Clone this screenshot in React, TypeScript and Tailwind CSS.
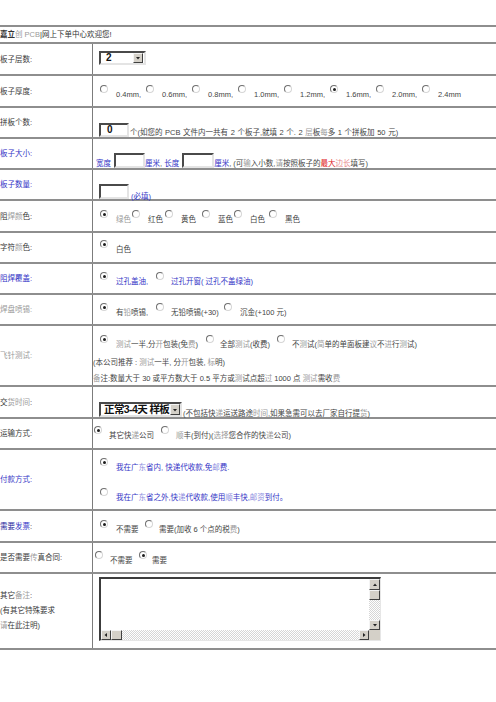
import React from 'react';

function Radio({ checked = false }: { checked?: boolean }) {
  return (
    <span className="flex items-center justify-center w-[8px] h-[8px] shrink-0 rounded-full border border-t-[#6f6f6f] border-l-[#6f6f6f] border-r-[#d6d6d6] border-b-[#d6d6d6] bg-white">
      {checked && <span className="w-[3px] h-[3px] rounded-full bg-[#1e1e1e]" />}
    </span>
  );
}

function Opt({
  checked = false,
  w = '',
  gap = 'ml-[8px]',
  children,
}: {
  checked?: boolean;
  w?: string;
  gap?: string;
  children: React.ReactNode;
}) {
  return (
    <div className={`flex items-start shrink-0 ${w}`}>
      <Radio checked={checked} />
      <span className={`mt-[5px] leading-[9px] whitespace-nowrap ${gap}`}>{children}</span>
    </div>
  );
}

function Box({ cls, children }: { cls: string; children?: React.ReactNode }) {
  return (
    <div
      className={`shrink-0 bg-white border-2 border-t-[#4a4a4a] border-l-[#4a4a4a] border-r-[#e4e4e4] border-b-[#e4e4e4] flex items-center ${cls}`}
    >
      {children}
    </div>
  );
}

function Arrow({ dir }: { dir: 'up' | 'down' | 'left' | 'right' }) {
  const pts = {
    up: '1,4 3,1.5 5,4',
    down: '1,2 3,4.5 5,2',
    left: '4,1 1.5,3 4,5',
    right: '2,1 4.5,3 2,5',
  }[dir];
  return (
    <svg width="6" height="6" viewBox="0 0 6 6">
      <polygon points={pts} fill="#222" />
    </svg>
  );
}

function Btn({ cls, children }: { cls: string; children?: React.ReactNode }) {
  return (
    <div
      className={`shrink-0 bg-[#d4d0c8] border border-t-[#f4f4f4] border-l-[#f4f4f4] border-r-[#404040] border-b-[#404040] flex items-center justify-center ${cls}`}
    >
      {children}
    </div>
  );
}

function Row({
  h,
  label,
  cell,
  children,
}: {
  h: string;
  label: React.ReactNode;
  cell: string;
  children: React.ReactNode;
}) {
  return (
    <div className={`flex border-b-2 border-[#8e8e8e] ${h}`}>
      <div className="w-[93px] shrink-0 border-r border-[#7c7c7c] flex items-center text-[#3a3a3a]">
        {label}
      </div>
      <div className={`flex-1 min-w-0 ${cell}`}>{children}</div>
    </div>
  );
}

const blue = 'text-[#3434c6]';
const grey = 'text-[#9a9a9a]';

export default function App() {
  return (
    <div className="w-[496px] h-[702px] overflow-hidden bg-white pt-[25px] font-['Liberation_Sans','Noto_Sans_CJK_SC',sans-serif] text-[7.5px] leading-[9px] text-[#444]">
      <div className="border-t-2 border-[#8e8e8e]">
        <div className="h-[17px] flex items-center border-b-2 border-[#8e8e8e] text-[#333]">
          <span className="font-bold">嘉立</span>
          <span className={grey}>创 PCB</span>
          <span>|网上下单中心欢迎您!</span>
        </div>

        <Row h="h-[32px]" label="板子层数:" cell="pl-[6px] pt-[7px]">
          <Box cls="w-[47px] h-[14px]">
            <span className="flex-1 pl-[5px] font-bold text-[10px] leading-none text-[#111]">2</span>
            <Btn cls="w-[10px] h-[10px] mr-[1px]">
              <Arrow dir="down" />
            </Btn>
          </Box>
        </Row>

        <Row h="h-[32px]" label="板子厚度:" cell="pl-[7px] pt-[9px] flex">
          <Opt w="w-[46px]">0.4mm,</Opt>
          <Opt w="w-[46px]">0.6mm,</Opt>
          <Opt w="w-[46px]">0.8mm,</Opt>
          <Opt w="w-[46px]">1.0mm,</Opt>
          <Opt w="w-[46px]">1.2mm,</Opt>
          <Opt w="w-[46px]" checked>1.6mm,</Opt>
          <Opt w="w-[46px]">2.0mm,</Opt>
          <Opt>2.4mm</Opt>
        </Row>

        <Row h="h-[31px]" label="拼板个数:" cell="pl-[6px] pt-[5px] flex items-end">
          <Box cls="w-[30px] h-[14px]">
            <span className="pl-[6px] font-bold text-[10px] leading-none text-[#111]">0</span>
          </Box>
          <span className="ml-[1px] whitespace-nowrap [word-spacing:0.5px]">
            个(如您的 PCB 文件内一共有 2 个板子,就填 2 个. 2 <span className={grey}>层</span>板<span className={grey}>每</span>多 1 个拼板加 50 元)
          </span>
        </Row>

        <Row
          h="h-[31px]"
          label={<span className={blue}>板子大小:</span>}
          cell="pl-[3px] pt-[4px] flex items-end"
        >
          <span className={`${blue} whitespace-nowrap mr-[3px]`}>宽度</span>
          <Box cls="w-[31px] h-[15px]" />
          <span className="whitespace-nowrap">
            <span className={blue}>厘米</span>, <span className={blue}>长度</span>
          </span>
          <span className="ml-[3px]" />
          <Box cls="w-[32px] h-[15px]" />
          <span className="whitespace-nowrap">
            <span className={blue}>厘米</span>, (可<span className={grey}>输</span>入小数,<span className={grey}>请</span>按照板子的
            <span className="text-[#e01818]">最大</span>
            <span className="text-[#e88a8a]">边长</span>填写)
          </span>
        </Row>

        <Row
          h="h-[31px]"
          label={<span className={blue}>板子数量:</span>}
          cell="pl-[6px] pt-[5px] flex items-end"
        >
          <Box cls="w-[30px] h-[15px]" />
          <span className={`${blue} ml-[2px] -mb-[2px]`}>(必填)</span>
        </Row>

        <Row
          h="h-[32px]"
          label={
            <span>
              阻<span className={grey}>焊颜</span>色:
            </span>
          }
          cell="pl-[7px] pt-[9px] flex"
        >
          <Opt w="w-[32px]" checked>
            <span className={grey}>绿色</span>
          </Opt>
          <Opt w="w-[33px]">红色</Opt>
          <Opt w="w-[37px]">黄色</Opt>
          <Opt w="w-[32px]">蓝色</Opt>
          <Opt w="w-[35px]">白色</Opt>
          <Opt>黑色</Opt>
        </Row>

        <Row
          h="h-[31px]"
          label={
            <span>
              字符<span className={grey}>颜</span>色:
            </span>
          }
          cell="pl-[7px] pt-[7px] flex"
        >
          <Opt checked>白色</Opt>
        </Row>

        <Row
          h="h-[31px]"
          label={<span className={blue}>阻焊覆盖:</span>}
          cell={`pl-[7px] pt-[8px] flex ${blue}`}
        >
          <Opt w="w-[56px]" checked>
            过孔盖油,
          </Opt>
          <Opt gap="ml-[7px]">过孔开窗( 过孔不盖绿油)</Opt>
        </Row>

        <Row h="h-[31px]" label={<span className={grey}>焊盘喷锡:</span>} cell="pl-[7px] pt-[8px] flex">
          <Opt w="w-[56px]" checked>
            有<span className={grey}>铅</span>喷锡,
          </Opt>
          <Opt w="w-[68px]" gap="ml-[7px]">
            无铅喷锡(+30)
          </Opt>
          <Opt>沉金(+100 元)</Opt>
        </Row>

        <Row h="h-[61px]" label={<span className={grey}>飞针测试:</span>} cell="pt-[9px]">
          <div className="flex pl-[7px]">
            <Opt w="w-[106px]" checked>
              <span className={grey}>测试</span>一半,分<span className={grey}>开</span>包装(免<span className={grey}>费</span>)
            </Opt>
            <Opt w="w-[71px]" gap="ml-[6px]">
              全部<span className={grey}>测试</span>(收费)
            </Opt>
            <Opt gap="ml-[7px]">
              不<span className={grey}>测</span>试(<span className={grey}>简</span>单的单面板建<span className={grey}>议</span>不<span className={grey}>进</span>行<span className={grey}>测</span>试)
            </Opt>
          </div>
          <div className="mt-[6px] leading-[16px] whitespace-nowrap">
            <div>
              (本公司推荐 : <span className={grey}>测试</span>一半, 分<span className={grey}>开</span>包装, <span className={grey}>标</span>明)
            </div>
            <div>
              <span className={grey}>备</span>注:数量大于 30 或平方数大于 0.5 平方或<span className={grey}>测</span>试点超<span className={grey}>过</span> 1000 点 <span className={grey}>测试</span>需收<span className={grey}>费</span>
            </div>
          </div>
        </Row>

        <Row
          h="h-[32px]"
          label={
            <span>
              交<span className={grey}>货时间</span>:
            </span>
          }
          cell="pl-[6px] pt-[5px] flex items-end"
        >
          <Box cls="w-[83px] h-[15px]">
            <span className="flex-1 min-w-0 whitespace-nowrap pl-[3px] font-bold text-[10.5px] tracking-[-0.6px] leading-none text-[#111]">
              正常3-4天 样板
            </span>
            <Btn cls="w-[10px] h-[11px]">
              <Arrow dir="down" />
            </Btn>
          </Box>
          <span className="ml-[1px] -mb-[1px] whitespace-nowrap">
            (不包括快<span className={grey}>递</span>运送路途<span className={grey}>时间</span>,如果急需可以去厂家自行提<span className={grey}>货</span>)
          </span>
        </Row>

        <Row h="h-[31px]" label="运输方式:" cell="pl-[1px] pt-[7px] flex">
          <Opt w="w-[67px]" checked gap="ml-[7px]">
            其它快<span className={grey}>递</span>公司
          </Opt>
          <Opt gap="ml-[7px]">
            <span className={grey}>顺</span>丰(到付)(<span className={grey}>选择</span>您合作的快<span className={grey}>递</span>公司)
          </Opt>
        </Row>

        <Row
          h="h-[61px]"
          label={<span className={blue}>付款方式:</span>}
          cell={`pl-[7px] pt-[8px] ${blue}`}
        >
          <div className="flex">
            <Opt checked>
              我在广<span className="text-[#8c8ce0]">东</span>省内, 快递代收款,免<span className="text-[#8c8ce0]">邮</span>费.
            </Opt>
          </div>
          <div className="flex mt-[16px]">
            <Opt>
              我在广<span className="text-[#8c8ce0]">东</span>省之外,快<span className="text-[#8c8ce0]">递</span>代收款,使用<span className="text-[#8c8ce0]">顺</span>丰快,<span className="text-[#8c8ce0]">邮资</span>到付。
            </Opt>
          </div>
        </Row>

        <Row
          h="h-[32px]"
          label={
            <span>
              <span className="text-[#24249a]">需要</span>
              <span className={blue}>发票</span>:
            </span>
          }
          cell="pl-[7px] pt-[9px] flex"
        >
          <Opt w="w-[45px]" checked>
            不需要
          </Opt>
          <Opt gap="ml-[6px]">
            需要(加收 6 个点的税<span className={grey}>费</span>)
          </Opt>
        </Row>

        <Row
          h="h-[31px]"
          label={
            <span className="whitespace-nowrap">
              是否需要<span className={grey}>传</span>真合同:
            </span>
          }
          cell="pl-[2px] pt-[8px] flex"
        >
          <Opt w="w-[44px]" gap="ml-[7px]">
            不需要
          </Opt>
          <Opt checked gap="ml-[5px]">
            需要
          </Opt>
        </Row>

        <Row
          h="h-[76px]"
          label={
            <div className="leading-[15px] -mt-[2px]">
              <div>
                其它<span className={grey}>备注</span>:
              </div>
              <div>(有其它特殊要求</div>
              <div>
                <span className={grey}>请</span>在此注明)
              </div>
            </div>
          }
          cell="pl-[6px] pt-[3px]"
        >
          <div className="w-[282px] h-[64px] flex flex-col border-t-2 border-l-2 border-t-[#3c3c3c] border-l-[#3c3c3c] border-r border-b border-r-[#e6e6e6] border-b-[#e6e6e6]">
            <div className="flex flex-1 min-h-0">
              <div className="flex-1 bg-white" />
              <div className="w-[11px] flex flex-col">
                <Btn cls="h-[11px]">
                  <Arrow dir="up" />
                </Btn>
                <Btn cls="h-[10px]" />
                <div className="flex-1 bg-[image:repeating-conic-gradient(#d6d6d6_0%_25%,#ffffff_0%_50%)] bg-[length:2px_2px]" />
                <Btn cls="h-[10px]">
                  <Arrow dir="down" />
                </Btn>
              </div>
            </div>
            <div className="h-[10px] flex">
              <Btn cls="w-[10px]">
                <Arrow dir="left" />
              </Btn>
              <Btn cls="w-[11px]" />
              <div className="flex-1 bg-[image:repeating-conic-gradient(#d6d6d6_0%_25%,#ffffff_0%_50%)] bg-[length:2px_2px]" />
              <Btn cls="w-[10px]">
                <Arrow dir="right" />
              </Btn>
              <div className="w-[11px] bg-[#d4d0c8]" />
            </div>
          </div>
        </Row>
      </div>
    </div>
  );
}
